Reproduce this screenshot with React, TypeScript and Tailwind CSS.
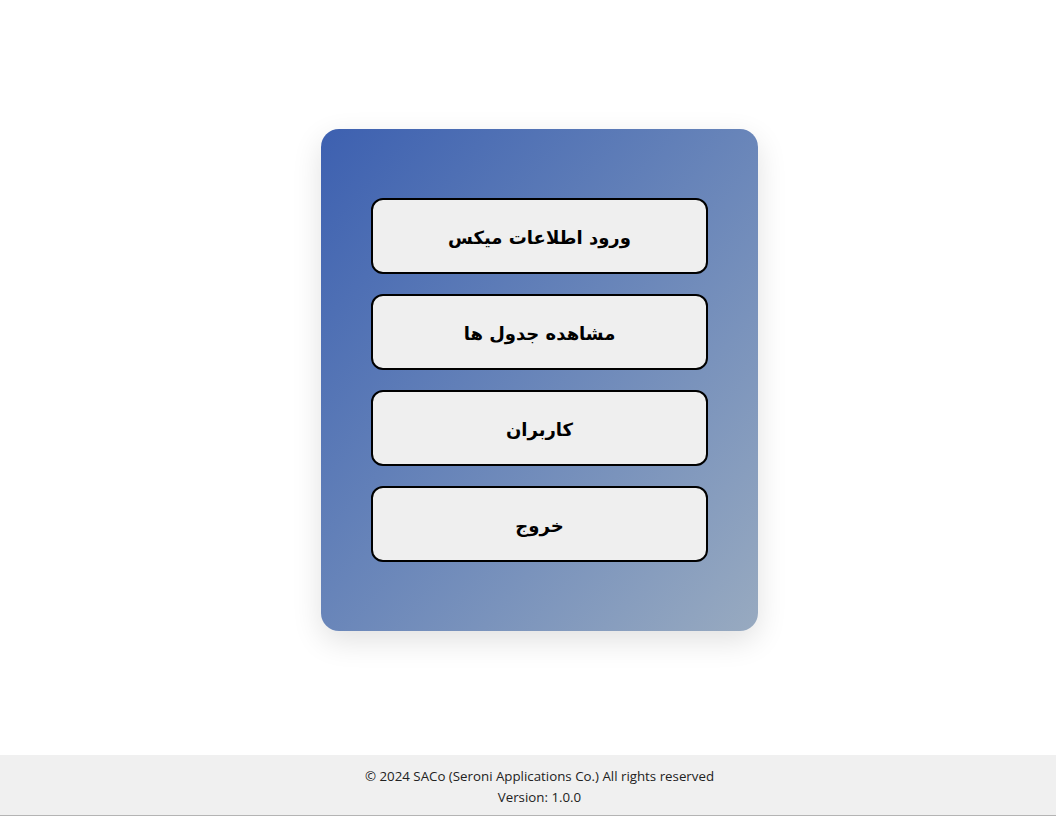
import React from 'react';

const App = () => {
  const items = ['ورود اطلاعات میکس', 'مشاهده جدول ها', 'کاربران', 'خروج'];

  return (
    <div className="min-h-screen flex flex-col bg-white">
      <main className="h-[755px] flex items-center justify-center pl-[23px] pt-[4px]">
        <div
          dir="rtl"
          className="w-[437px] h-[502px] rounded-[18px] bg-linear-to-br from-[#3d60b0] to-[#98aac0] shadow-[0_10px_30px_rgba(0,0,0,0.12)] px-[50px] py-[69px] flex flex-col gap-[20px]"
        >
          {items.map((label) => (
            <button
              key={label}
              className="h-[76px] w-full rounded-[12px] border-2 border-black bg-[#efefef] text-black text-[18px] font-bold pt-[3px]"
              style={{ fontFamily: '"DejaVu Sans", sans-serif' }}
            >
              {label}
            </button>
          ))}
        </div>
      </main>
      <footer className="h-[61px] bg-[#f0f0f0] border-b border-[#b4b4b4] flex flex-col items-center justify-center pl-[23px] pt-[3px] text-[13.3px] leading-[21px] text-[#222] font-['Open_Sans',sans-serif]">
        <div>© 2024 SACo (Seroni Applications Co.) All rights reserved</div>
        <div>Version: 1.0.0</div>
      </footer>
    </div>
  );
};

export default App;
